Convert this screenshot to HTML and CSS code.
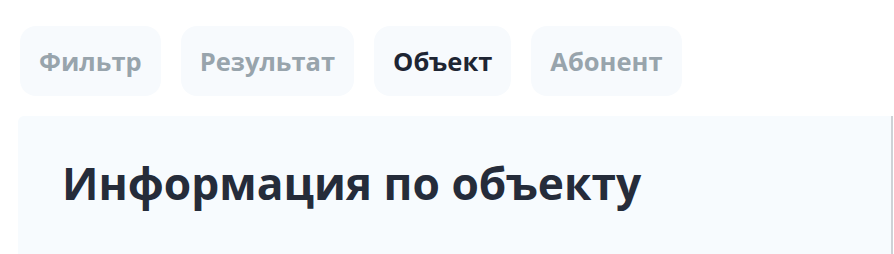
FILE: index.html
```html
<!DOCTYPE html>
<html lang="ru">
<head>
  <meta charset="UTF-8">
  <title>Информация по объекту</title>
  <meta name="viewport" content="width=device-width, initial-scale=1.0">
  <link rel="stylesheet" href="styles.css">
</head>
<body>
  <div class="page">
    <div class="tabs">
      <div class="tab">Фильтр</div>
      <div class="tab">Результат</div>
      <div class="tab active">Объект</div>
      <div class="tab">Абонент</div>
    </div>

    <div class="panel">
      <h1>Информация по объекту</h1>
    </div>
  </div>
</body>
</html>
```
FILE: styles.css
```css
html, body {
  margin: 0;
  padding: 0;
  background: #fff;
  font-family: "Open Sans", "Noto Sans", sans-serif;
  overflow: hidden;
}

.page {
  padding: 26px 0 0 18px;
}

.tabs {
  display: flex;
  gap: 20px;
  padding-left: 2px;
}

.tab {
  background: #f7fafd;
  border-radius: 16px;
  padding: 0 19px;
  height: 70px;
  line-height: 70px;
  font-size: 25.5px;
  font-weight: 700;
  color: #98a4ac;
}

.tab.active {
  color: #1e2533;
}

.panel {
  margin-top: 20px;
  margin-right: 1px;
  background: #f7fbfe;
  border-right: 2px solid #cdd2d6;
  border-radius: 6px 0 0 0;
  padding: 36px 44px 60px;
}

h1 {
  margin: 0;
  font-size: 44.3px;
  font-weight: 700;
  color: #252c3a;
  line-height: 62px;
}
```
